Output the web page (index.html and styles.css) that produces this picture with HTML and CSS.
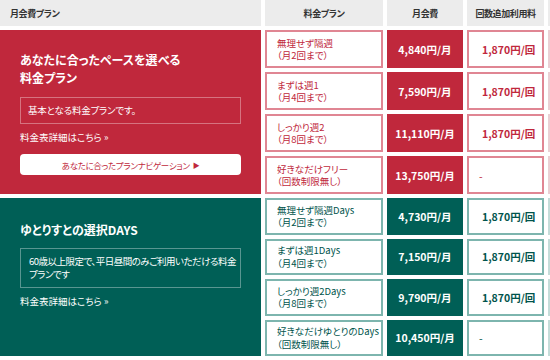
FILE: index.html
```html
<!DOCTYPE html>
<html lang="ja">
<head>
<meta charset="utf-8">
<title>月会費プラン</title>
<link rel="stylesheet" href="styles.css">
</head>
<body>
<div class="plans">
  <div class="th th-left">月会費プラン</div>
  <div class="th">料金プラン</div>
  <div class="th">月会費</div>
  <div class="th">回数追加利用料</div>
  <div class="th"></div>

  <!-- standard plans -->
  <div class="group group-red">
    <h2 class="group-title">あなたに合ったペースを選べる<br>料金プラン</h2>
    <p class="group-note">基本となる料金プランです。</p>
    <a class="group-link" href="#">料金表詳細はこちら <span class="raquo">»</span></a>
    <a class="navi-btn" href="#">あなたに合ったプランナビゲーション <span class="tri">▶</span></a>
  </div>

  <div class="cell name red">無理せず隔週<br>（月2回まで）</div>
  <div class="cell price bg-red">4,840円/月</div>
  <div class="cell extra red">1,870円/回</div>
  <div class="cell edge red"></div>

  <div class="cell name red">まずは週1<br>（月4回まで）</div>
  <div class="cell price bg-red">7,590円/月</div>
  <div class="cell extra red">1,870円/回</div>
  <div class="cell edge red"></div>

  <div class="cell name red">しっかり週2<br>（月8回まで）</div>
  <div class="cell price bg-red">11,110円/月</div>
  <div class="cell extra red">1,870円/回</div>
  <div class="cell edge red"></div>

  <div class="cell name red">好きなだけフリー<br>（回数制限無し）</div>
  <div class="cell price bg-red">13,750円/月</div>
  <div class="cell extra red dash">-</div>
  <div class="cell edge red"></div>

  <!-- weekday daytime plans -->
  <div class="group group-green">
    <h2 class="group-title">ゆとりすとの選択DAYS</h2>
    <p class="group-note nowrap">60歳以上限定で、平日昼間のみご利用いただける料金<br>プランです</p>
    <a class="group-link" href="#">料金表詳細はこちら <span class="raquo">»</span></a>
  </div>

  <div class="cell name green">無理せず隔週Days<br>（月2回まで）</div>
  <div class="cell price bg-green">4,730円/月</div>
  <div class="cell extra green">1,870円/回</div>
  <div class="cell edge green"></div>

  <div class="cell name green">まずは週1Days<br>（月4回まで）</div>
  <div class="cell price bg-green">7,150円/月</div>
  <div class="cell extra green">1,870円/回</div>
  <div class="cell edge green"></div>

  <div class="cell name green">しっかり週2Days<br>（月8回まで）</div>
  <div class="cell price bg-green">9,790円/月</div>
  <div class="cell extra green">1,870円/回</div>
  <div class="cell edge green"></div>

  <div class="cell name green">好きなだけゆとりのDays<br>（回数制限無し）</div>
  <div class="cell price bg-green">10,450円/月</div>
  <div class="cell extra green dash">-</div>
  <div class="cell edge green"></div>
</div>
</body>
</html>
```

FILE: styles.css
```css
* { box-sizing: border-box; }

html, body {
  margin: 0;
  overflow: hidden;
  background: #fff;
}

body {
  width: 550px;
  height: 360px;
  font-family: "Noto Sans CJK JP", "Noto Sans", sans-serif;
  font-size: 9.5px;
  font-feature-settings: "palt";
  color: #333;
}

.plans {
  display: grid;
  grid-template-columns: 261px 118px 76px 77px 2px;
  grid-template-rows: 26px repeat(4, 38px) repeat(4, 36.5px);
  column-gap: 4px;
  row-gap: 4px;
  width: 550px;
}

/* header row */
.th {
  background: #ececec;
  font-weight: bold;
  font-size: 9px;
  letter-spacing: -0.4px;
  display: flex;
  align-items: center;
  justify-content: center;
  color: #333;
  white-space: nowrap;
  overflow: hidden;
}

.th-left {
  justify-content: flex-start;
  padding-left: 10px;
}

/* left description panels */
.group {
  grid-column: 1;
  grid-row: span 4;
  color: #fff;
  padding: 21px 20px 0;
  display: flex;
  flex-direction: column;
  align-items: stretch;
}

.group-red { background: #c0283c; }
.group-green { background: #005f56; }

.group-title {
  margin: 0;
  font-size: 12px;
  line-height: 18px;
  font-weight: bold;
}

.group-green .group-title { margin-top: 2px; }

.group-note {
  margin: 10px 0 0;
  border: 1px solid rgba(255, 255, 255, 0.35);
  padding: 6px 7px;
  line-height: 13px;
  font-size: 9.5px;
  letter-spacing: -0.2px;
}

.group-note.nowrap {
  white-space: nowrap;
  letter-spacing: -0.5px;
}

.group-green .group-note { margin-top: 9px; padding: 6px 8px; }

.group-link {
  color: #fff;
  text-decoration: none;
  margin-top: 7px;
  font-size: 9.5px;
  line-height: 12px;
}

.navi-btn {
  margin-top: 11px;
  height: 21px;
  background: #fff;
  border-radius: 4px;
  color: #c0283c;
  text-decoration: none;
  font-size: 8.5px;
  letter-spacing: -0.3px;
  display: flex;
  align-items: center;
  justify-content: center;
}

.tri { font-size: 7px; margin-left: 3px; }

/* table cells */
.cell {
  border: 2px solid;
  display: flex;
  align-items: center;
  white-space: nowrap;
  overflow: hidden;
}

.cell.red { border-color: #e08693; color: #c0283c; background: #fff; }
.cell.green { border-color: #7db5ae; color: #00544c; background: #fff; }

.name {
  padding-left: 10px;
  line-height: 12.5px;
  font-size: 9.5px;
}

.price {
  border: none;
  justify-content: center;
  color: #fff;
  font-weight: bold;
  font-size: 10.5px;
}

.bg-red { background: #c0283c; }
.bg-green { background: #005f56; }

.extra {
  padding-left: 13px;
  font-weight: bold;
  font-size: 10.5px;
}

.dash { padding-left: 10px; font-weight: normal; }

.cell.edge { padding: 0; }
.cell.edge.red { border-color: #ead0d4; }
.cell.edge.green { border-color: #c5dcd9; }
```
